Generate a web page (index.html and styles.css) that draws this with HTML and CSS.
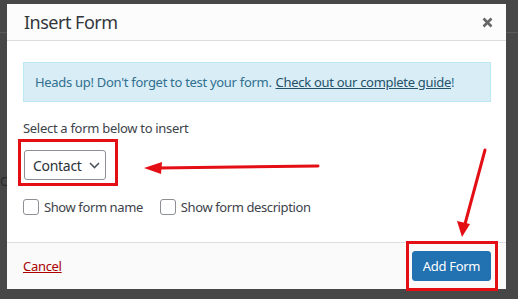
FILE: index.html
```html
<!DOCTYPE html>
<html lang="en">
<head>
  <meta charset="UTF-8">
  <title>Insert Form</title>
  <link rel="stylesheet" href="styles.css">
</head>
<body>
  <div class="backdrop">
    <div class="behind-line"></div>
    <div class="behind-text">Op</div>
    <div class="modal">
      <div class="modal-head">
        <div class="modal-title">Insert Form</div>
        <svg class="close" width="11" height="11" viewBox="0 0 11 11"><path d="M1.5 1.5 L9.5 9.5 M9.5 1.5 L1.5 9.5" stroke="#666" stroke-width="2.6"/></svg>
      </div>
      <div class="modal-body">
        <div class="notice">Heads up! Don't forget to test your form. <a href="#">Check out our complete guide</a>!</div>
        <div class="label">Select a form below to insert</div>
        <div class="select">Contact
          <svg width="11" height="7" viewBox="0 0 11 7"><path d="M1 1 L5.5 5.5 L10 1" fill="none" stroke="#50575e" stroke-width="1.6"/></svg>
        </div>
        <div class="options">
          <label class="check"><span class="box"></span>Show form name</label>
          <label class="check"><span class="box"></span>Show form description</label>
        </div>
      </div>
      <div class="modal-foot">
        <a href="#" class="cancel">Cancel</a>
        <button class="add">Add Form</button>
      </div>
    </div>
    <div class="mark mark-select"></div>
    <div class="mark mark-button"></div>
    <svg class="arrows" width="518" height="299" viewBox="0 0 518 299">
      <line x1="318" y1="166" x2="158" y2="168" stroke="#e40f14" stroke-width="3" stroke-linecap="round"/>
      <polygon points="144,168 162,162 161,174" fill="#e40f14"/>
      <line x1="485" y1="150" x2="465" y2="224" stroke="#e40f14" stroke-width="3" stroke-linecap="round"/>
      <polygon points="462,237 457,221 470,224" fill="#e40f14"/>
    </svg>
  </div>
</body>
</html>
```
FILE: styles.css
```css
body {
  margin: 0;
  background: #474747;
  font-family: "Segoe UI", "Noto Sans", sans-serif;
}
.backdrop {
  position: relative;
  width: 518px;
  height: 299px;
  overflow: hidden;
  padding: 4px 0 0 7px;
  box-sizing: border-box;
}
.behind-line {
  position: absolute;
  left: 0;
  top: 32px;
  width: 518px;
  height: 1px;
  background: #5a5a5a;
}
.behind-text {
  position: absolute;
  left: 0;
  top: 172px;
  font-size: 13px;
  color: #2a2a2a;
}
.modal {
  position: relative;
  width: 499px;
  height: 285px;
  background: #fff;
  display: flex;
  flex-direction: column;
  letter-spacing: -0.3px;
}
.modal-head {
  height: 36px;
  background: #fcfcfc;
  border-bottom: 1px solid #dcdcde;
  display: flex;
  align-items: center;
  justify-content: space-between;
  padding: 0 13px 0 17px;
}
.modal-title {
  font-size: 18px;
  color: #32373c;
  letter-spacing: -0.5px;
}
.modal-body {
  flex: 1;
  padding: 21px 15px 0 16px;
}
.notice {
  height: 38px;
  background: #d9edf7;
  border: 1px solid #bce8f1;
  color: #31708f;
  font-size: 13px;
  display: flex;
  align-items: center;
  padding-left: 11px;
}
.notice a {
  color: #245269;
  margin-left: 4px;
}
.label {
  margin-top: 17px;
  font-size: 13px;
  color: #3c434a;
}
.select {
  margin-top: 13px;
  margin-left: 1px;
  height: 28px;
  width: 72px;
  border: 1px solid #8c8f94;
  border-radius: 3px;
  display: flex;
  align-items: center;
  gap: 7px;
  padding-left: 8px;
  font-size: 14px;
  color: #2c3338;
}
.options {
  display: flex;
  gap: 17px;
  margin-top: 18px;
  font-size: 13px;
  color: #3c434a;
  letter-spacing: -0.4px;
}
.check {
  display: flex;
  align-items: center;
  gap: 5px;
}
.box {
  width: 14px;
  height: 14px;
  border: 1px solid #8c8f94;
  border-radius: 3px;
}
.modal-foot {
  height: 46px;
  background: #fafafa;
  border-top: 1px solid #dcdcde;
  display: flex;
  align-items: center;
  justify-content: space-between;
  padding: 0 15px 0 16px;
}
.cancel {
  color: #a00;
  font-size: 13px;
}
.add {
  height: 30px;
  width: 79px;
  background: #2271b1;
  border: 1px solid #2271b1;
  border-radius: 3px;
  color: #fff;
  font-family: inherit;
  font-size: 13px;
  letter-spacing: -0.3px;
  padding: 0;
}
.mark {
  position: absolute;
  border: 3px solid #e40f14;
  box-sizing: border-box;
}
.mark-select {
  left: 18px;
  top: 139px;
  width: 100px;
  height: 47px;
}
.mark-button {
  left: 406px;
  top: 241px;
  width: 92px;
  height: 50px;
}
.arrows {
  position: absolute;
  left: 0;
  top: 0;
}
```
